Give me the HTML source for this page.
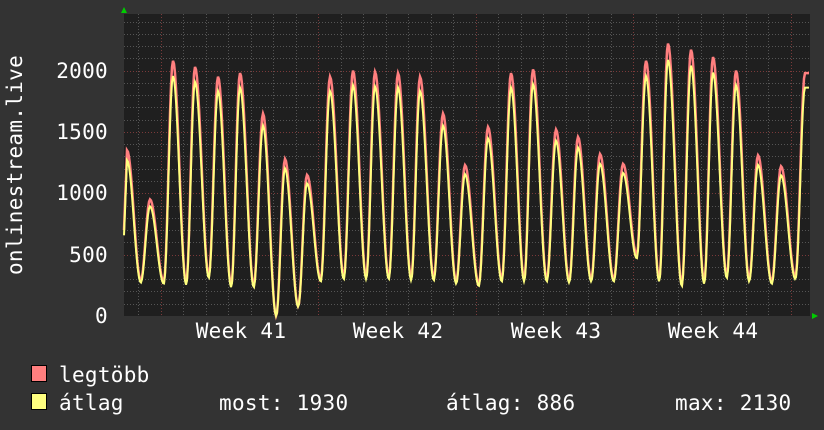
<!DOCTYPE html>
<html><head><meta charset="utf-8"><style>
html,body{margin:0;padding:0;background:#333;}
body{width:824px;height:430px;overflow:hidden;position:relative;font-family:"DejaVu Sans Mono","Liberation Mono",monospace;color:#fff;}
</style></head><body>
<svg id="g" width="824" height="430" xmlns="http://www.w3.org/2000/svg" style="position:absolute;left:0;top:0">
<rect x="0" y="0" width="824" height="430" fill="#333"/>
<rect x="124" y="14" width="686" height="302" fill="#1f1f1f"/>
<g id="grid"></g>
<g id="data"></g>
<polygon points="121,13 127,13 124,7" fill="#0c0"/>
<polygon points="812,313 812,319 818,316" fill="#0c0"/>
<g font-family="DejaVu Sans Mono, Liberation Mono, monospace" font-size="21" fill="#fff" letter-spacing="0.3">
<text x="108" y="78" text-anchor="end">2000</text>
<text x="108" y="139" text-anchor="end">1500</text>
<text x="108" y="200" text-anchor="end">1000</text>
<text x="108" y="262" text-anchor="end">500</text>
<text x="108" y="323" text-anchor="end">0</text>
<text transform="translate(22,165) rotate(-90)" text-anchor="middle">onlinestream.live</text>
<text x="241" y="338" text-anchor="middle">Week 41</text>
<text x="398" y="338" text-anchor="middle">Week 42</text>
<text x="556" y="338" text-anchor="middle">Week 43</text>
<text x="713" y="338" text-anchor="middle">Week 44</text>
<rect x="31.5" y="365.5" width="15" height="16" fill="#ff7f7f" stroke="#000"/>
<rect x="31.5" y="393.5" width="15" height="16" fill="#ffff7f" stroke="#000"/>
<text x="59" y="382">legtöbb</text>
<text x="59" y="410">átlag</text>
<text x="219" y="410">most: 1930</text>
<text x="446" y="410">átlag: 886</text>
<text x="675" y="410">max: 2130</text>
</g>
</svg>
<script>
var NS="http://www.w3.org/2000/svg";
var grid=document.getElementById('grid'),data=document.getElementById('data');
function ln(x1,y1,x2,y2,c){var l=document.createElementNS(NS,'line');l.setAttribute('x1',x1);l.setAttribute('y1',y1);l.setAttribute('x2',x2);l.setAttribute('y2',y2);l.setAttribute('stroke',c);l.setAttribute('stroke-width','1');l.setAttribute('stroke-dasharray','1,2');grid.appendChild(l);}
for(var v=100;v<=2400;v+=100){var y=Math.round(316-v*0.1227)+0.5;ln(124,y,810,y,v%500==0?'#7a3a3a':'#555');}
for(var i=-2;i<32;i++){var x=160.5+i*22.5;if(x<125||x>809)continue;var xr=Math.round(x)+0.5;ln(xr,14,xr,316,(i%7==0)?'#7a3a3a':'#555');}
var pk=[[127,1350,290],[150,950,280],[173,2080,270],[195,2030,330],[218,1950,250],[240,1980,250],[263,1650,0],[285,1280,80],[307,1150,300],[330,1950,320],[353,2000,320],[375,1990,320],[398,1980,310],[420,1950,310],[443,1650,280],[465,1230,260],[488,1540,300],[511,1980,300],[533,2010,300],[556,1520,290],[578,1460,300],[600,1320,300],[623,1240,500],[646,2080,300],[668,2220,260],[691,2170,280],[713,2110,330],[736,2000,300],[758,1310,280],[781,1220,320],[805,1980,180]];
function val(x){
 if(x<=pk[0][0]){return 700+(pk[0][1]-700)*(x-124)/(pk[0][0]-124);}
 for(var i=0;i<pk.length-1;i++){
  var p=pk[i],n=pk[i+1];
  if(x>=p[0]&&x<n[0]){var d=n[0]-p[0];var tm=p[0]+0.6*d;var tr=p[2];
   if(x<tm){var t=(x-p[0])/(tm-p[0]);var s=0.5+0.5*Math.cos(Math.PI*t);return tr+(p[1]-tr)*s;}
   var t=(x-tm)/(n[0]-tm);var s=0.5-0.5*Math.cos(Math.PI*t);return tr+(n[1]-tr)*s;}
 }
 return pk[pk.length-1][1];
}
var a='',b='';
for(var x=124;x<=809;x+=1){var v=val(x);var y1=316-v*0.1227;var y2=316-v*0.94*0.1227;a+=(x==124?'M':'L')+x+','+y1.toFixed(1);b+=(x==124?'M':'L')+x+','+y2.toFixed(1);}
function pth(d,c,w){var p=document.createElementNS(NS,'path');p.setAttribute('d',d);p.setAttribute('fill','none');p.setAttribute('stroke',c);p.setAttribute('stroke-width',w);data.appendChild(p);}
pth(a,'#ff7f7f',2.5);pth(b,'#ffff7f',2);
</script>
</body></html>
